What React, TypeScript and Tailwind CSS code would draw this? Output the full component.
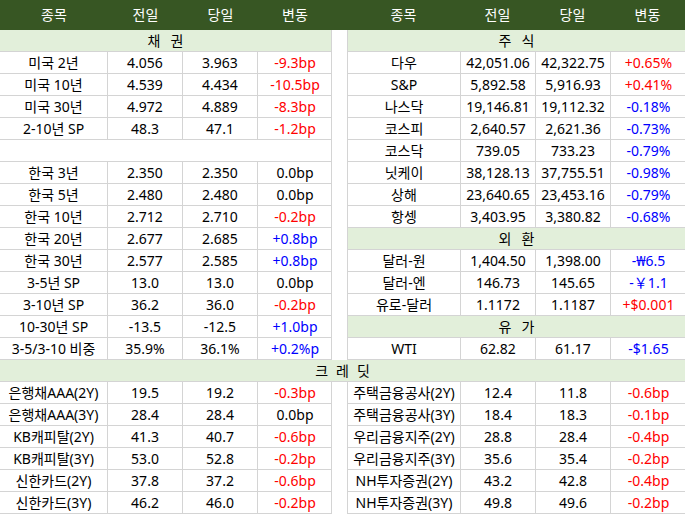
import React from "react";

type C = "r" | "b" | "k";
type Row = { t: "sec"; label: string[] } | { t: "blank" } | { t: "row"; c: [string, string, string, string, C] };

const leftTop: Row[] = [
  { t: "sec", label: ["채", "권"] },
  { t: "row", c: ["미국 2년", "4.056", "3.963", "-9.3bp", "r"] },
  { t: "row", c: ["미국 10년", "4.539", "4.434", "-10.5bp", "r"] },
  { t: "row", c: ["미국 30년", "4.972", "4.889", "-8.3bp", "r"] },
  { t: "row", c: ["2-10년 SP", "48.3", "47.1", "-1.2bp", "r"] },
  { t: "blank" },
  { t: "row", c: ["한국 3년", "2.350", "2.350", "0.0bp", "k"] },
  { t: "row", c: ["한국 5년", "2.480", "2.480", "0.0bp", "k"] },
  { t: "row", c: ["한국 10년", "2.712", "2.710", "-0.2bp", "r"] },
  { t: "row", c: ["한국 20년", "2.677", "2.685", "+0.8bp", "b"] },
  { t: "row", c: ["한국 30년", "2.577", "2.585", "+0.8bp", "b"] },
  { t: "row", c: ["3-5년 SP", "13.0", "13.0", "0.0bp", "k"] },
  { t: "row", c: ["3-10년 SP", "36.2", "36.0", "-0.2bp", "r"] },
  { t: "row", c: ["10-30년 SP", "-13.5", "-12.5", "+1.0bp", "b"] },
  { t: "row", c: ["3-5/3-10 비중", "35.9%", "36.1%", "+0.2%p", "b"] },
];

const rightTop: Row[] = [
  { t: "sec", label: ["주", "식"] },
  { t: "row", c: ["다우", "42,051.06", "42,322.75", "+0.65%", "r"] },
  { t: "row", c: ["S&P", "5,892.58", "5,916.93", "+0.41%", "r"] },
  { t: "row", c: ["나스닥", "19,146.81", "19,112.32", "-0.18%", "b"] },
  { t: "row", c: ["코스피", "2,640.57", "2,621.36", "-0.73%", "b"] },
  { t: "row", c: ["코스닥", "739.05", "733.23", "-0.79%", "b"] },
  { t: "row", c: ["닛케이", "38,128.13", "37,755.51", "-0.98%", "b"] },
  { t: "row", c: ["상해", "23,640.65", "23,453.16", "-0.79%", "b"] },
  { t: "row", c: ["항셍", "3,403.95", "3,380.82", "-0.68%", "b"] },
  { t: "sec", label: ["외", "환"] },
  { t: "row", c: ["달러-원", "1,404.50", "1,398.00", "-₩6.5", "b"] },
  { t: "row", c: ["달러-엔", "146.73", "145.65", "-￥1.1", "b"] },
  { t: "row", c: ["유로-달러", "1.1172", "1.1187", "+$0.001", "r"] },
  { t: "sec", label: ["유", "가"] },
  { t: "row", c: ["WTI", "62.82", "61.17", "-$1.65", "b"] },
];

const leftCredit: Row[] = [
  { t: "row", c: ["은행채AAA(2Y)", "19.5", "19.2", "-0.3bp", "r"] },
  { t: "row", c: ["은행채AAA(3Y)", "28.4", "28.4", "0.0bp", "k"] },
  { t: "row", c: ["KB캐피탈(2Y)", "41.3", "40.7", "-0.6bp", "r"] },
  { t: "row", c: ["KB캐피탈(3Y)", "53.0", "52.8", "-0.2bp", "r"] },
  { t: "row", c: ["신한카드(2Y)", "37.8", "37.2", "-0.6bp", "r"] },
  { t: "row", c: ["신한카드(3Y)", "46.2", "46.0", "-0.2bp", "r"] },
];

const rightCredit: Row[] = [
  { t: "row", c: ["주택금융공사(2Y)", "12.4", "11.8", "-0.6bp", "r"] },
  { t: "row", c: ["주택금융공사(3Y)", "18.4", "18.3", "-0.1bp", "r"] },
  { t: "row", c: ["우리금융지주(2Y)", "28.8", "28.4", "-0.4bp", "r"] },
  { t: "row", c: ["우리금융지주(3Y)", "35.6", "35.4", "-0.2bp", "r"] },
  { t: "row", c: ["NH투자증권(2Y)", "43.2", "42.8", "-0.4bp", "r"] },
  { t: "row", c: ["NH투자증권(3Y)", "49.8", "49.6", "-0.2bp", "r"] },
];

const colorCls: Record<C, string> = {
  r: "text-[#ff0000]",
  b: "text-[#0000ff]",
  k: "text-black",
};

function Table({ rows, side }: { rows: Row[]; side: "L" | "R" }) {
  const grid =
    side === "L"
      ? "grid grid-cols-[108px_75px_75px_74px]"
      : "grid grid-cols-[113px_75px_75px_75px]";
  const wrap =
    side === "L" ? "w-[332px] border-r border-[#d4d4d4]" : "w-[338px] border-l border-[#d4d4d4]";
  return (
    <div className={`flex flex-col ${wrap}`}>
      {rows.map((row, i) => {
        if (row.t === "sec") {
          return (
            <div
              key={i}
              className="h-[22px] bg-[#e2efda] border-b border-[#d4d4d4] flex items-center justify-center gap-[10px]"
            >
              {row.label.map((l, j) => (
                <span key={j}>{l}</span>
              ))}
            </div>
          );
        }
        if (row.t === "blank") {
          return <div key={i} className="h-[22px] border-b border-[#d4d4d4]" />;
        }
        return (
          <div key={i} className={`${grid} h-[22px] border-b border-[#d4d4d4]`}>
            {row.c.slice(0, 4).map((v, j) => (
              <div
                key={j}
                className={`flex items-center justify-center whitespace-nowrap ${
                  j < 3 ? "border-r border-[#d4d4d4]" : ""
                } ${j === 3 ? colorCls[row.c[4]] : "text-black"}`}
              >
                {v}
              </div>
            ))}
          </div>
        );
      })}
    </div>
  );
}

export default function App() {
  const heads = ["종목", "전일", "당일", "변동"];
  return (
    <div
      className="w-[685px] h-[514px] overflow-hidden bg-white text-[14px] leading-none text-black"
      style={{ fontFamily: '"Noto Sans", "Noto Sans CJK KR", sans-serif' }}
    >
      <div className="h-[30px] bg-[#375623] text-white flex">
        <div className="w-[332px] grid grid-cols-[108px_75px_75px_74px]">
          {heads.map((h) => (
            <div key={h} className="flex items-center justify-center">
              {h}
            </div>
          ))}
        </div>
        <div className="w-[15px]" />
        <div className="w-[338px] grid grid-cols-[113px_75px_75px_75px]">
          {heads.map((h) => (
            <div key={h} className="flex items-center justify-center">
              {h}
            </div>
          ))}
        </div>
      </div>
      <div className="flex">
        <Table rows={leftTop} side="L" />
        <div className="w-[15px]" />
        <Table rows={rightTop} side="R" />
      </div>
      <div className="h-[22px] bg-[#e2efda] border-b border-[#d4d4d4] flex items-center justify-center gap-[8px]">
        <span>크</span>
        <span>레</span>
        <span>딧</span>
      </div>
      <div className="flex">
        <Table rows={leftCredit} side="L" />
        <div className="w-[15px]" />
        <Table rows={rightCredit} side="R" />
      </div>
    </div>
  );
}
